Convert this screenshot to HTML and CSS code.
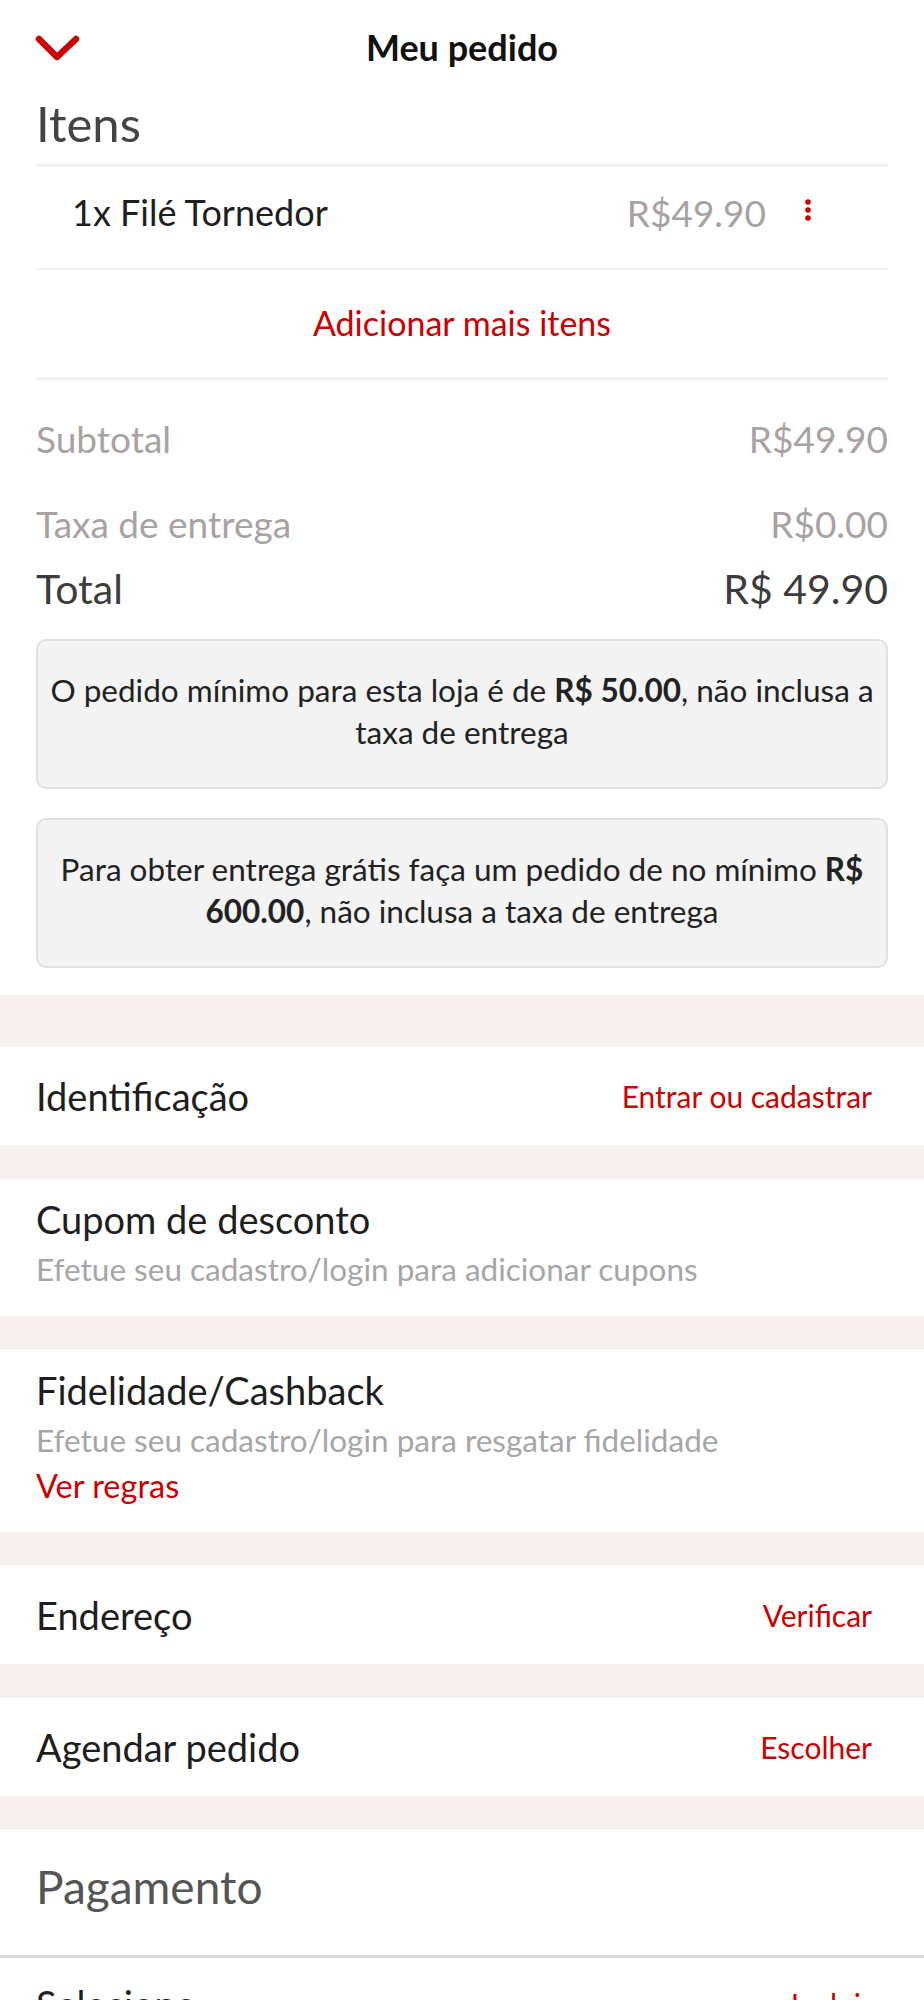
FILE: index.html
```html
<!DOCTYPE html>
<html lang="pt-BR">
<head>
  <meta charset="UTF-8" />
  <meta name="viewport" content="width=device-width, initial-scale=1.0"/>
  <title>Meu pedido</title>
  <link rel="stylesheet" href="styles.css">
</head>
<body>
  <!-- Pedido -->
  <div class="order">
    <div class="topbar">
      <svg class="back" width="48" height="30" viewBox="0 0 48 30">
        <polyline points="5,6 23,24 42,6" fill="none" stroke="#cc0000" stroke-width="6.5" stroke-linecap="round" stroke-linejoin="round"/>
      </svg>
      <h1>Meu pedido</h1>
      <span></span>
    </div>

    <h2 class="section-title">Itens</h2>
    <div class="item-list">
      <div class="item">
        <span class="item-name">1x Filé Tornedor</span>
        <span class="item-price">R$49.90</span>
        <svg class="item-menu" width="12" height="24" viewBox="0 0 12 24">
          <circle cx="6" cy="3" r="2.8" fill="#cc0000"/>
          <circle cx="6" cy="11" r="2.8" fill="#cc0000"/>
          <circle cx="6" cy="19" r="2.8" fill="#cc0000"/>
        </svg>
      </div>
      <div class="add-more">Adicionar mais itens</div>
    </div>

    <div class="summary-row first"><span>Subtotal</span><span>R$49.90</span></div>
    <div class="summary-row fee"><span>Taxa de entrega</span><span>R$0.00</span></div>
    <div class="summary-row total"><span>Total</span><span>R$ 49.90</span></div>

    <div class="notice">O pedido mínimo para esta loja é de <b>R$ 50.00</b>, não inclusa a taxa de entrega</div>
    <div class="notice">Para obter entrega grátis faça um pedido de no mínimo <b>R$ 600.00</b>, não inclusa a taxa de entrega</div>
  </div>

  <div class="band first"></div>
  <div class="row">
    <span class="row-title">Identificação</span>
    <a class="row-action">Entrar ou cadastrar</a>
  </div>

  <div class="band"></div>
  <div class="row stacked">
    <div class="row-title">Cupom de desconto</div>
    <div class="row-sub">Efetue seu cadastro/login para adicionar cupons</div>
  </div>

  <div class="band"></div>
  <div class="row stacked">
    <div class="row-title">Fidelidade/Cashback</div>
    <div class="row-sub">Efetue seu cadastro/login para resgatar fidelidade</div>
    <a class="row-link">Ver regras</a>
  </div>

  <div class="band"></div>
  <div class="row">
    <span class="row-title">Endereço</span>
    <a class="row-action">Verificar</a>
  </div>

  <div class="band"></div>
  <div class="row">
    <span class="row-title">Agendar pedido</span>
    <a class="row-action">Escolher</a>
  </div>

  <div class="band"></div>
  <div class="payment-head">Pagamento</div>
  <div class="row payment">
    <span class="row-title">Selecione</span>
    <a class="row-action">Incluir</a>
  </div>
</body>
</html>
```

FILE: styles.css
```css
body {
  margin: 0;
  background: #fff;
  color: #1e1e1e;
  font-family: Lato, "Noto Sans", sans-serif;
}
.order {
  padding: 26px 36px 27px;
}
.topbar {
  display: grid;
  grid-template-columns: 1fr auto 1fr;
  align-items: center;
}
.back {
  display: block;
  margin-left: -2px;
}
.topbar h1 {
  margin: 0;
  font-size: 36px;
  line-height: 43px;
  font-weight: 700;
  color: #111;
}
.section-title {
  margin: 27px 0 12px;
  font-size: 49px;
  line-height: 55px;
  font-weight: 400;
  color: #444;
}
.item-list {
  border-top: 4px solid #f2f2f2;
}
.item {
  display: flex;
  align-items: flex-start;
  padding: 25px 0 35px 36px;
  border-bottom: 2px solid #f0f0f0;
  font-size: 36px;
  line-height: 41px;
}
.item-name {
  flex: 1;
}
.item-price {
  color: #a8a2a2;
  font-size: 37px;
}
.item-menu {
  display: block;
  margin: 7px 74px 0 36px;
}
.add-more {
  padding: 32px 0 34px;
  border-bottom: 4px solid #f2f2f2;
  text-align: center;
  color: #cc0000;
  font-size: 34px;
  line-height: 41px;
}
.summary-row {
  display: flex;
  justify-content: space-between;
  font-size: 37px;
  line-height: 42px;
  color: #a8a2a2;
}
.summary-row.first { margin-top: 37px; }
.summary-row.fee { margin-top: 43px; }
.summary-row.total {
  margin-top: 21px;
  font-size: 41px;
  line-height: 46px;
  color: #3c3c3c;
}
.notice {
  margin-top: 27px;
  padding: 28px 2px 34px;
  background: #f3f3f3;
  border: 2px solid #e0e0e0;
  border-radius: 10px;
  text-align: center;
  font-size: 31.5px;
  line-height: 42px;
  color: #222;
}
.notice + .notice {
  margin-top: 29px;
}
.band {
  height: 34px;
  background: #f6f1ee;
}
.band.first {
  height: 52px;
}
.row {
  display: flex;
  justify-content: space-between;
  align-items: center;
  min-height: 98px;
  padding: 0 52px 0 36px;
  font-size: 38px;
  line-height: 42px;
}
.row-action {
  color: #cc0000;
  font-size: 30px;
}
.row.stacked {
  display: block;
  min-height: 0;
  padding: 19px 52px 29px 36px;
}
.row-sub {
  margin-top: 12px;
  font-size: 31.5px;
  line-height: 35px;
  color: #a6a6a6;
}
.row-link {
  display: block;
  margin-top: 10px;
  font-size: 32.5px;
  line-height: 35px;
  color: #cc0000;
}
.payment-head {
  padding: 31px 36px 42px;
  border-bottom: 3px solid #d9d9d9;
  font-size: 46px;
  line-height: 52px;
  color: #555;
}
.row.payment {
  align-items: flex-start;
  padding-top: 25px;
}
```
